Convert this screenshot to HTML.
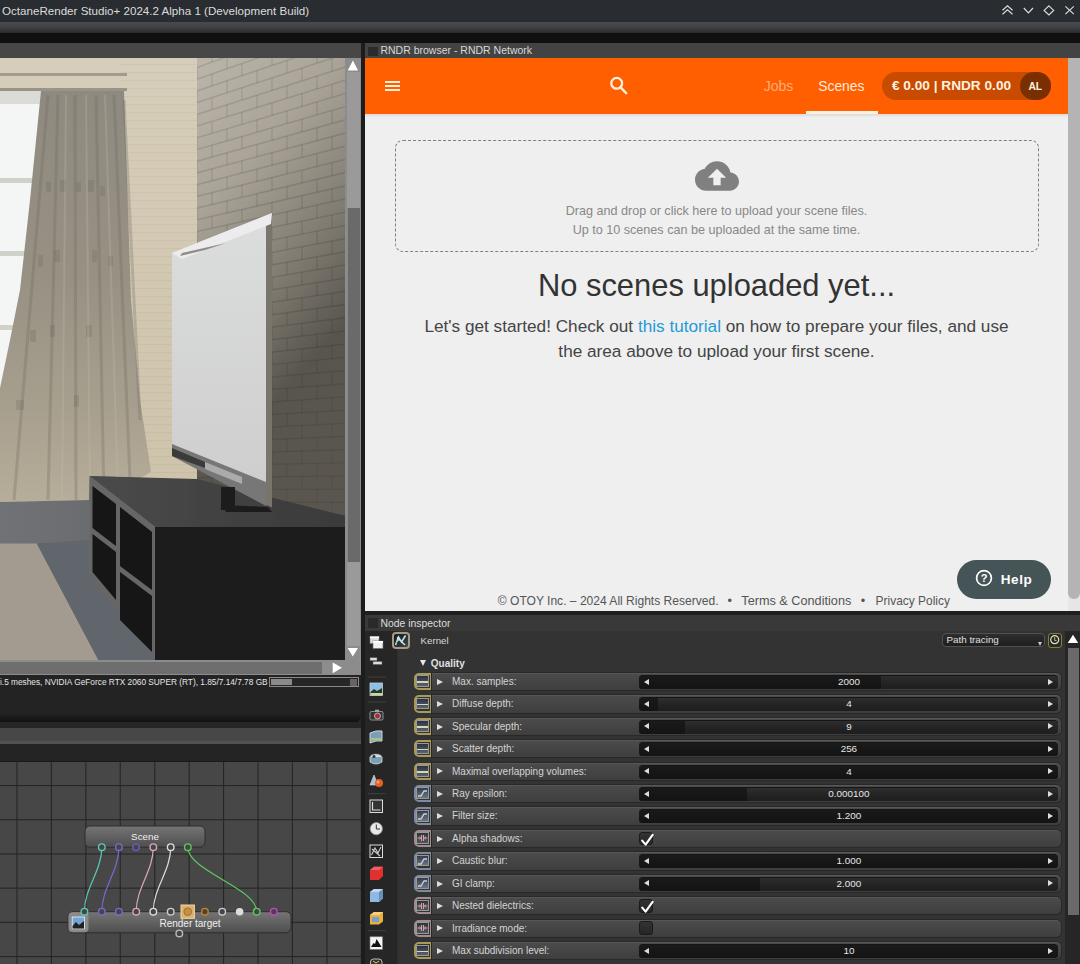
<!DOCTYPE html>
<html><head><meta charset="utf-8"><style>
*{margin:0;padding:0;box-sizing:border-box}
html,body{width:1080px;height:964px;overflow:hidden;background:#2b2b2b;font-family:"Liberation Sans",sans-serif}
.a{position:absolute}
#title{left:0;top:0;width:1080px;height:22px;background:#292c31;color:#dcdcdc;font-size:11.6px;line-height:22px;padding-left:2px;white-space:nowrap}
#band{left:0;top:22px;width:1080px;height:11px;background:linear-gradient(#4a4a4e,#444447 40%,#2a2a2c)}
#black{left:0;top:32.5px;width:1080px;height:10.5px;background:#101010}
#lhead{left:0;top:43px;width:361px;height:15px;background:#474747}
#vscroll{left:345px;top:58px;width:16px;height:602px;background:#8c8c8c}
#vtrack{left:347px;top:72px;width:12.5px;height:574px;background:#9a9a9a}
#vthumb{left:347px;top:208px;width:12.5px;height:354px;background:#6a6a6a;border-left:1px solid #8a8a8a}
#hscroll{left:0;top:660px;width:361px;height:14.5px;background:#8c8c8c}
#hthumb{left:0;top:662px;width:322px;height:12px;background:#6e6e6e}
#status{left:0;top:674.5px;width:361px;height:14px;background:#232323;color:#e6e6e6;font-size:8.3px;line-height:14px;white-space:nowrap;letter-spacing:0px}
#prog{left:269px;top:677.2px;width:90px;height:10px;border:1px solid #8a8a8a;background:#262626}
#ldark{left:0;top:688.5px;width:361px;height:34px;background:linear-gradient(#232323 0,#232323 72%,#0f0f0f 100%);border-radius:0 0 7px 0}
#lgap{left:0;top:722px;width:361px;height:6px;background:#262626}
#lbar1{left:0;top:728px;width:361px;height:16px;background:#474747;border-bottom:3px solid #525252}
#lbar2{left:0;top:744px;width:361px;height:17px;background:#242424}
#grid{left:0;top:761px;width:361px;height:203px;background:#474747}
#divider{left:361px;top:43px;width:4px;height:921px;background:#1c1c1c}
#rhead{left:365px;top:43px;width:715px;height:15px;background:#434343;color:#d8d8d8;font-size:10.5px;line-height:15px;padding-left:15.4px;white-space:nowrap}
#rchk{left:368.3px;top:46.5px;width:9.3px;height:9.2px;background:#2b2b2b}
#web{left:365px;top:58px;width:703px;height:552.5px;background:#efefef;overflow:hidden}
#wscroll{left:1068px;top:58px;width:12px;height:552.5px;background:#e6e6e6}
#wthumb{left:1068px;top:58px;width:12px;height:541px;background:#b4b4b4;border-radius:0 0 6px 6px}
#orange{left:0;top:0;width:703px;height:56px;background:#ff5f00;box-shadow:0 1px 3px rgba(0,0,0,0.12)}
#ham{left:19.8px;top:22.9px;width:15px;height:10.5px;border-top:2px solid #fff1d8;border-bottom:2px solid #fff1d8}
#ham:after{content:"";position:absolute;left:0;top:2.3px;width:15px;height:2px;background:#fff1d8}
#jobs{left:398.7px;top:17px;font-size:14px;color:#ffab78;line-height:22px;white-space:nowrap}
#scenes{left:453.2px;top:17px;font-size:13.9px;color:#ffeadb;line-height:22px;white-space:nowrap}
#uline{left:440.5px;top:53px;width:72.5px;height:3px;background:#fff1e2}
#pill{left:517px;top:14px;width:168.6px;height:27.8px;background:#c84b00;border-radius:14px}
#ptxt{left:526.9px;top:17px;font-size:13.66px;font-weight:bold;color:#fff1e0;line-height:22px;white-space:nowrap}
#av{left:655px;top:14px;padding-top:1px;width:30.6px;height:27.8px;background:#7a2f00;border-radius:15px;color:#fff1e0;font-weight:bold;font-size:10.3px;line-height:27.8px;text-align:center}
#dash{left:29.5px;top:82px;width:644.5px;height:112px;border:1.8px dashed #7f7f7f;border-radius:8px}
#drag{left:0;top:144.2px;width:703px;text-align:center;color:#888;font-size:12.6px;line-height:18.4px}
#h1{left:0;top:209.3px;width:703px;text-align:center;color:#333;font-size:30.9px;line-height:38px;white-space:nowrap}
#para{left:0;top:256.3px;width:703px;text-align:center;color:#444;font-size:17.2px;line-height:24.5px}
#para span{color:#1e9bd7}
.ft{top:534px;color:#555;font-size:12.7px;line-height:18px;white-space:nowrap}
#help{left:592px;top:501.5px;width:93.8px;height:39.3px;background:#455457;border-radius:20px}
#helpt{left:635.7px;top:513px;color:#fff;font-weight:bold;font-size:13.5px;line-height:18px;letter-spacing:0.6px}
#ihead{left:365px;top:610.5px;width:715px;height:20.5px;background:#393939;border-top:4px solid #1f1f1f;color:#dedede;font-size:10.4px;line-height:18.5px;padding-left:15.5px;white-space:nowrap}
#ichk{left:367.5px;top:618px;width:10.5px;height:10px;background:#2a2a2a}
#istrip{left:365px;top:631px;width:31.5px;height:333px;background:#262626}
#ibody{left:396.5px;top:631px;width:668.5px;height:333px;background:#333333;border-left:1.5px solid #2d2d2d}
#iscroll{left:1065px;top:631px;width:15px;height:333px;background:#262626}
#ithumb{left:1068px;top:648.3px;width:10.6px;height:267px;background:#6a6a6a}
#kico{left:392px;top:632.4px;width:18px;height:16.2px;border:2px solid #a89a84;border-radius:4px;background:linear-gradient(135deg,#0c1820,#3a4a50)}
#ktxt{left:420.6px;top:635px;color:#d8d8d8;font-size:9.7px;line-height:12px}
#qtxt{left:430.8px;top:657px;color:#e0e0e0;font-size:10px;line-height:13px;font-weight:bold;white-space:nowrap}
#dd{left:941.5px;top:632.8px;width:103px;height:14.4px;background:linear-gradient(#2e2e2e,#1e1e1e);border:1px solid #505050;border-radius:4px;color:#e0e0e0;font-size:9.8px;line-height:12.4px;padding-left:4px}
#ddbtn{left:1047.9px;top:632.8px;width:14.4px;height:14.8px;border:1.5px solid #8a8030;border-radius:3px;background:#2a2a20}
.ico{left:413.9px;width:18.1px;height:17.4px;border:2.4px solid;border-right-width:2px;border-radius:5px 0 0 5px;background:#333}
.icin{position:absolute;left:0.6px;top:0.6px;width:12.2px;height:11.6px;border:1px solid #9a9a90}
.rowbg{left:432px;width:629px;height:17.4px;background:linear-gradient(#4b4b4b,#3e3e3e);border-top:1px solid #575757;border-radius:0 5px 5px 0;box-shadow:0 0 0 1px #282828}
.rarr{left:436.5px;width:0;height:0;border-left:6px solid #ddd;border-top:3px solid transparent;border-bottom:3px solid transparent}
.lbl{left:452px;color:#d4d4d4;font-size:10px;line-height:17.4px;white-space:nowrap}
.sld{left:639.4px;width:419px;height:14px;background:linear-gradient(#2e2e2e,#222 60%,#1e1e1e);border-radius:3.5px;border-top:1px solid #151515;overflow:hidden}
.sfill{position:absolute;left:0;top:0;height:14px;background:linear-gradient(#1a1a1a,#131313)}
.sl{position:absolute;left:4.2px;top:2.8px;width:0;height:0;border-right:5.5px solid #ddd;border-top:3px solid transparent;border-bottom:3px solid transparent}
.sr{position:absolute;right:5px;top:2.8px;width:0;height:0;border-left:5.5px solid #ddd;border-top:3px solid transparent;border-bottom:3px solid transparent}
.sval{position:absolute;left:0;right:0;top:0;text-align:center;color:#e6e6e6;font-size:9.9px;line-height:11.5px}
.chk{left:639.3px;width:13.7px;height:13.7px;background:linear-gradient(#333,#262626);border:1px solid #1a1a1a;border-radius:3px}
</style></head><body>
<div id="title" class="a">OctaneRender Studio+ 2024.2 Alpha 1 (Development Build)</div>
<svg class="a" style="left:995px;top:0" width="85" height="22" viewBox="995 0 85 22">
<path d="M1002.5 10.2 L1007.5 5.8 L1012.5 10.2 M1002.5 14.2 L1007.5 9.8 L1012.5 14.2" stroke="#dedede" stroke-width="1.15" fill="none"/>
<path d="M1023.8 8 L1028.4 12.9 L1033 8" stroke="#dedede" stroke-width="1.15" fill="none"/>
<path d="M1048.9 5.9 L1053.7 10.4 L1048.9 15 L1044.1 10.4 Z" stroke="#dedede" stroke-width="1.15" fill="none"/>
<path d="M1065.4 6.3 L1073.8 14.2 M1073.8 6.3 L1065.4 14.2" stroke="#dedede" stroke-width="1.15" fill="none"/>
</svg>
<div id="band" class="a"></div>
<div id="black" class="a"></div>
<div id="lhead" class="a"></div>
<svg class="a" style="left:0;top:58px" width="346" height="602" viewBox="0 58 346 602">
<defs>
<linearGradient id="brick" x1="0" y1="0" x2="0.35" y2="1">
<stop offset="0" stop-color="#bcb6aa"/><stop offset="0.3" stop-color="#aaa498"/><stop offset="0.58" stop-color="#827d73"/><stop offset="0.82" stop-color="#58554e"/><stop offset="1" stop-color="#5a5750"/></linearGradient>
<linearGradient id="plaster" x1="0" y1="0" x2="0" y2="1">
<stop offset="0" stop-color="#d6cdba"/><stop offset="1" stop-color="#cbbfa4"/></linearGradient>
<linearGradient id="curt" x1="0" y1="0" x2="0" y2="1">
<stop offset="0" stop-color="#8f8a7f"/><stop offset="0.45" stop-color="#979184"/><stop offset="0.75" stop-color="#a69e8d"/><stop offset="1" stop-color="#b6ad9a"/></linearGradient>
<linearGradient id="tv" x1="0" y1="0" x2="0" y2="1">
<stop offset="0" stop-color="#dcdddd"/><stop offset="1" stop-color="#cdcdcd"/></linearGradient>
<linearGradient id="floor" x1="0" y1="0" x2="1" y2="0">
<stop offset="0" stop-color="#707276"/><stop offset="1" stop-color="#5c5c5c"/></linearGradient>
<linearGradient id="ctop" x1="0" y1="0" x2="1" y2="0">
<stop offset="0" stop-color="#4a4a4a"/><stop offset="1" stop-color="#3a3a3a"/></linearGradient>
<pattern id="bp" width="22" height="11" patternUnits="userSpaceOnUse" patternTransform="skewY(10)">
<path d="M0 0.5H22M0 6H22M11 0V5.5M0 5.5V11" stroke="#000" stroke-opacity="0.12" stroke-width="1.2" fill="none"/>
</pattern>
<pattern id="pp" width="10" height="8" patternUnits="userSpaceOnUse">
<path d="M0 0.5H10" stroke="#8a7f68" stroke-opacity="0.09" stroke-width="1.2" fill="none"/>
</pattern>
<filter id="bl"><feGaussianBlur stdDeviation="0.7"/></filter>
</defs>
<g filter="url(#bl)">
<rect x="0" y="58" width="346" height="602" fill="url(#plaster)"/>
<rect x="120" y="58" width="80" height="420" fill="url(#pp)"/>
<polygon points="197,58 346,58 346,524 197,480" fill="url(#brick)"/>
<clipPath id="bc"><polygon points="197,58 346,58 346,524 197,480"/></clipPath><g clip-path="url(#bc)" stroke="#000" fill="none">
<path d="M197 -166.8 L346 -250.0" stroke-opacity="0.11" stroke-width="1.6"/>
<path d="M197 -155.1 L346 -236.8" stroke-opacity="0.11" stroke-width="1.6"/>
<path d="M197 -143.4 L346 -223.6" stroke-opacity="0.11" stroke-width="1.6"/>
<path d="M197 -131.7 L346 -210.4" stroke-opacity="0.11" stroke-width="1.6"/>
<path d="M197 -120.0 L346 -197.2" stroke-opacity="0.11" stroke-width="1.6"/>
<path d="M197 -108.3 L346 -184.0" stroke-opacity="0.11" stroke-width="1.6"/>
<path d="M197 -96.5 L346 -170.8" stroke-opacity="0.11" stroke-width="1.6"/>
<path d="M197 -84.8 L346 -157.6" stroke-opacity="0.11" stroke-width="1.6"/>
<path d="M197 -73.1 L346 -144.4" stroke-opacity="0.11" stroke-width="1.6"/>
<path d="M197 -61.4 L346 -131.2" stroke-opacity="0.11" stroke-width="1.6"/>
<path d="M197 -49.7 L346 -118.0" stroke-opacity="0.11" stroke-width="1.6"/>
<path d="M197 -38.0 L346 -104.8" stroke-opacity="0.11" stroke-width="1.6"/>
<path d="M197 -26.2 L346 -91.6" stroke-opacity="0.11" stroke-width="1.6"/>
<path d="M197 -14.5 L346 -78.4" stroke-opacity="0.11" stroke-width="1.6"/>
<path d="M197 -2.8 L346 -65.2" stroke-opacity="0.11" stroke-width="1.6"/>
<path d="M197 8.9 L346 -52.0" stroke-opacity="0.11" stroke-width="1.6"/>
<path d="M197 20.6 L346 -38.8" stroke-opacity="0.11" stroke-width="1.6"/>
<path d="M197 32.3 L346 -25.6" stroke-opacity="0.11" stroke-width="1.6"/>
<path d="M197 44.1 L346 -12.4" stroke-opacity="0.11" stroke-width="1.6"/>
<path d="M197 55.8 L346 0.8" stroke-opacity="0.11" stroke-width="1.6"/>
<path d="M197 67.5 L346 14.0" stroke-opacity="0.11" stroke-width="1.6"/>
<path d="M197 79.2 L346 27.2" stroke-opacity="0.11" stroke-width="1.6"/>
<path d="M197 90.9 L346 40.4" stroke-opacity="0.11" stroke-width="1.6"/>
<path d="M197 102.6 L346 53.6" stroke-opacity="0.11" stroke-width="1.6"/>
<path d="M197 114.4 L346 66.8" stroke-opacity="0.11" stroke-width="1.6"/>
<path d="M197 126.1 L346 80.0" stroke-opacity="0.11" stroke-width="1.6"/>
<path d="M197 137.8 L346 93.2" stroke-opacity="0.11" stroke-width="1.6"/>
<path d="M197 149.5 L346 106.4" stroke-opacity="0.11" stroke-width="1.6"/>
<path d="M197 161.2 L346 119.6" stroke-opacity="0.11" stroke-width="1.6"/>
<path d="M197 172.9 L346 132.8" stroke-opacity="0.11" stroke-width="1.6"/>
<path d="M197 184.7 L346 146.0" stroke-opacity="0.11" stroke-width="1.6"/>
<path d="M197 196.4 L346 159.2" stroke-opacity="0.11" stroke-width="1.6"/>
<path d="M197 208.1 L346 172.4" stroke-opacity="0.11" stroke-width="1.6"/>
<path d="M197 219.8 L346 185.6" stroke-opacity="0.11" stroke-width="1.6"/>
<path d="M197 231.5 L346 198.8" stroke-opacity="0.11" stroke-width="1.6"/>
<path d="M197 243.2 L346 212.0" stroke-opacity="0.11" stroke-width="1.6"/>
<path d="M197 255.0 L346 225.2" stroke-opacity="0.11" stroke-width="1.6"/>
<path d="M197 266.7 L346 238.4" stroke-opacity="0.11" stroke-width="1.6"/>
<path d="M197 278.4 L346 251.6" stroke-opacity="0.11" stroke-width="1.6"/>
<path d="M197 290.1 L346 264.8" stroke-opacity="0.11" stroke-width="1.6"/>
<path d="M197 301.8 L346 278.0" stroke-opacity="0.11" stroke-width="1.6"/>
<path d="M197 313.5 L346 291.2" stroke-opacity="0.11" stroke-width="1.6"/>
<path d="M197 325.3 L346 304.4" stroke-opacity="0.11" stroke-width="1.6"/>
<path d="M197 337.0 L346 317.6" stroke-opacity="0.11" stroke-width="1.6"/>
<path d="M197 348.7 L346 330.8" stroke-opacity="0.11" stroke-width="1.6"/>
<path d="M197 360.4 L346 344.0" stroke-opacity="0.11" stroke-width="1.6"/>
<path d="M197 372.1 L346 357.2" stroke-opacity="0.09" stroke-width="1.6"/>
<path d="M197 383.8 L346 370.4" stroke-opacity="0.09" stroke-width="1.6"/>
<path d="M197 395.6 L346 383.6" stroke-opacity="0.09" stroke-width="1.6"/>
<path d="M197 407.3 L346 396.8" stroke-opacity="0.09" stroke-width="1.6"/>
<path d="M197 419.0 L346 410.0" stroke-opacity="0.09" stroke-width="1.6"/>
<path d="M197 430.7 L346 423.2" stroke-opacity="0.09" stroke-width="1.6"/>
<path d="M197 442.4 L346 436.4" stroke-opacity="0.09" stroke-width="1.6"/>
<path d="M197 454.1 L346 449.6" stroke-opacity="0.09" stroke-width="1.6"/>
<path d="M197 465.9 L346 462.8" stroke-opacity="0.09" stroke-width="1.6"/>
<path d="M197 477.6 L346 476.0" stroke-opacity="0.09" stroke-width="1.6"/>
<path d="M197 489.3 L346 489.2" stroke-opacity="0.09" stroke-width="1.6"/>
<path d="M197 501.0 L346 502.4" stroke-opacity="0.09" stroke-width="1.6"/>
<path d="M197 512.7 L346 515.6" stroke-opacity="0.09" stroke-width="1.6"/>
<path d="M197 524.4 L346 528.8" stroke-opacity="0.09" stroke-width="1.6"/>
<path d="M197.0 -166.8 L197.0 -155.1 M227.0 -183.6 L227.0 -171.6 M257.0 -200.3 L257.0 -188.0 M287.0 -217.1 L287.0 -204.5 M317.0 -233.8 L317.0 -220.9 M347.0 -250.6 L347.0 -237.3" stroke-opacity="0.09" stroke-width="1.5"/>
<path d="M212.0 -163.4 L212.0 -151.5 M242.0 -179.8 L242.0 -167.6 M272.0 -196.2 L272.0 -183.8 M302.0 -212.7 L302.0 -199.9 M332.0 -229.1 L332.0 -216.1" stroke-opacity="0.09" stroke-width="1.5"/>
<path d="M197.0 -143.4 L197.0 -131.7 M227.0 -159.6 L227.0 -147.5 M257.0 -175.7 L257.0 -163.4 M287.0 -191.8 L287.0 -179.2 M317.0 -208.0 L317.0 -195.1 M347.0 -224.1 L347.0 -210.9" stroke-opacity="0.09" stroke-width="1.5"/>
<path d="M212.0 -139.6 L212.0 -127.8 M242.0 -155.5 L242.0 -143.3 M272.0 -171.3 L272.0 -158.8 M302.0 -187.2 L302.0 -174.4 M332.0 -203.0 L332.0 -189.9" stroke-opacity="0.09" stroke-width="1.5"/>
<path d="M197.0 -120.0 L197.0 -108.3 M227.0 -135.5 L227.0 -123.5 M257.0 -151.1 L257.0 -138.8 M287.0 -166.6 L287.0 -154.0 M317.0 -182.2 L317.0 -169.3 M347.0 -197.7 L347.0 -184.5" stroke-opacity="0.09" stroke-width="1.5"/>
<path d="M212.0 -115.9 L212.0 -104.0 M242.0 -131.1 L242.0 -119.0 M272.0 -146.4 L272.0 -133.9 M302.0 -161.6 L302.0 -148.9 M332.0 -176.9 L332.0 -163.8" stroke-opacity="0.09" stroke-width="1.5"/>
<path d="M197.0 -96.5 L197.0 -84.8 M227.0 -111.5 L227.0 -99.5 M257.0 -126.4 L257.0 -114.1 M287.0 -141.4 L287.0 -128.8 M317.0 -156.3 L317.0 -143.4 M347.0 -171.3 L347.0 -158.1" stroke-opacity="0.09" stroke-width="1.5"/>
<path d="M212.0 -92.2 L212.0 -80.3 M242.0 -106.8 L242.0 -94.6 M272.0 -121.5 L272.0 -109.0 M302.0 -136.1 L302.0 -123.3 M332.0 -150.8 L332.0 -137.7" stroke-opacity="0.09" stroke-width="1.5"/>
<path d="M197.0 -73.1 L197.0 -61.4 M227.0 -87.5 L227.0 -75.5 M257.0 -101.8 L257.0 -89.5 M287.0 -116.2 L287.0 -103.6 M317.0 -130.5 L317.0 -117.6 M347.0 -144.9 L347.0 -131.7" stroke-opacity="0.09" stroke-width="1.5"/>
<path d="M212.0 -68.4 L212.0 -56.6 M242.0 -82.5 L242.0 -70.3 M272.0 -96.5 L272.0 -84.1 M302.0 -110.6 L302.0 -97.8 M332.0 -124.6 L332.0 -111.6" stroke-opacity="0.09" stroke-width="1.5"/>
<path d="M197.0 -49.7 L197.0 -38.0 M227.0 -63.4 L227.0 -51.4 M257.0 -77.2 L257.0 -64.9 M287.0 -90.9 L287.0 -78.3 M317.0 -104.7 L317.0 -91.8 M347.0 -118.5 L347.0 -105.2" stroke-opacity="0.09" stroke-width="1.5"/>
<path d="M212.0 -44.7 L212.0 -32.8 M242.0 -58.1 L242.0 -46.0 M272.0 -71.6 L272.0 -59.1 M302.0 -85.1 L302.0 -72.3 M332.0 -98.5 L332.0 -85.5" stroke-opacity="0.09" stroke-width="1.5"/>
<path d="M197.0 -26.2 L197.0 -14.5 M227.0 -39.4 L227.0 -27.4 M257.0 -52.6 L257.0 -40.2 M287.0 -65.7 L287.0 -53.1 M317.0 -78.9 L317.0 -66.0 M347.0 -92.0 L347.0 -78.8" stroke-opacity="0.09" stroke-width="1.5"/>
<path d="M212.0 -21.0 L212.0 -9.1 M242.0 -33.8 L242.0 -21.7 M272.0 -46.7 L272.0 -34.2 M302.0 -59.5 L302.0 -46.8 M332.0 -72.4 L332.0 -59.3" stroke-opacity="0.09" stroke-width="1.5"/>
<path d="M197.0 -2.8 L197.0 8.9 M227.0 -15.4 L227.0 -3.4 M257.0 -27.9 L257.0 -15.6 M287.0 -40.5 L287.0 -27.9 M317.0 -53.1 L317.0 -40.1 M347.0 -65.6 L347.0 -52.4" stroke-opacity="0.09" stroke-width="1.5"/>
<path d="M212.0 2.8 L212.0 14.6 M242.0 -9.5 L242.0 2.7 M272.0 -21.8 L272.0 -9.3 M302.0 -34.0 L302.0 -21.3 M332.0 -46.3 L332.0 -33.2" stroke-opacity="0.09" stroke-width="1.5"/>
<path d="M197.0 20.6 L197.0 32.3 M227.0 8.7 L227.0 20.7 M257.0 -3.3 L257.0 9.0 M287.0 -15.3 L287.0 -2.7 M317.0 -27.2 L317.0 -14.3 M347.0 -39.2 L347.0 -26.0" stroke-opacity="0.09" stroke-width="1.5"/>
<path d="M212.0 26.5 L212.0 38.4 M242.0 14.8 L242.0 27.0 M272.0 3.2 L272.0 15.6 M302.0 -8.5 L302.0 4.3 M332.0 -20.2 L332.0 -7.1" stroke-opacity="0.09" stroke-width="1.5"/>
<path d="M197.0 44.1 L197.0 55.8 M227.0 32.7 L227.0 44.7 M257.0 21.3 L257.0 33.6 M287.0 10.0 L287.0 22.6 M317.0 -1.4 L317.0 11.5 M347.0 -12.8 L347.0 0.4" stroke-opacity="0.09" stroke-width="1.5"/>
<path d="M212.0 50.2 L212.0 62.1 M242.0 39.2 L242.0 51.3 M272.0 28.1 L272.0 40.6 M302.0 17.0 L302.0 29.8 M332.0 6.0 L332.0 19.0" stroke-opacity="0.09" stroke-width="1.5"/>
<path d="M197.0 67.5 L197.0 79.2 M227.0 56.7 L227.0 68.7 M257.0 45.9 L257.0 58.3 M287.0 35.2 L287.0 47.8 M317.0 24.4 L317.0 37.3 M347.0 13.6 L347.0 26.9" stroke-opacity="0.09" stroke-width="1.5"/>
<path d="M212.0 74.0 L212.0 85.8 M242.0 63.5 L242.0 75.7 M272.0 53.0 L272.0 65.5 M302.0 42.6 L302.0 55.3 M332.0 32.1 L332.0 45.1" stroke-opacity="0.09" stroke-width="1.5"/>
<path d="M197.0 90.9 L197.0 102.6 M227.0 80.7 L227.0 92.8 M257.0 70.6 L257.0 82.9 M287.0 60.4 L287.0 73.0 M317.0 50.2 L317.0 63.1 M347.0 40.1 L347.0 53.3" stroke-opacity="0.09" stroke-width="1.5"/>
<path d="M212.0 97.7 L212.0 109.6 M242.0 87.8 L242.0 100.0 M272.0 78.0 L272.0 90.4 M302.0 68.1 L302.0 80.8 M332.0 58.2 L332.0 71.3" stroke-opacity="0.09" stroke-width="1.5"/>
<path d="M197.0 114.4 L197.0 126.1 M227.0 104.8 L227.0 116.8 M257.0 95.2 L257.0 107.5 M287.0 85.6 L287.0 98.2 M317.0 76.1 L317.0 89.0 M347.0 66.5 L347.0 79.7" stroke-opacity="0.09" stroke-width="1.5"/>
<path d="M212.0 121.4 L212.0 133.3 M242.0 112.2 L242.0 124.3 M272.0 102.9 L272.0 115.3 M302.0 93.6 L302.0 106.4 M332.0 84.3 L332.0 97.4" stroke-opacity="0.09" stroke-width="1.5"/>
<path d="M197.0 137.8 L197.0 149.5 M227.0 128.8 L227.0 140.8 M257.0 119.8 L257.0 132.1 M287.0 110.9 L287.0 123.5 M317.0 101.9 L317.0 114.8 M347.0 92.9 L347.0 106.1" stroke-opacity="0.09" stroke-width="1.5"/>
<path d="M212.0 145.2 L212.0 157.0 M242.0 136.5 L242.0 148.7 M272.0 127.8 L272.0 140.3 M302.0 119.1 L302.0 131.9 M332.0 110.5 L332.0 123.5" stroke-opacity="0.09" stroke-width="1.5"/>
<path d="M197.0 161.2 L197.0 172.9 M227.0 152.8 L227.0 164.9 M257.0 144.5 L257.0 156.8 M287.0 136.1 L287.0 148.7 M317.0 127.7 L317.0 140.6 M347.0 119.3 L347.0 132.5" stroke-opacity="0.09" stroke-width="1.5"/>
<path d="M212.0 168.9 L212.0 180.8 M242.0 160.8 L242.0 173.0 M272.0 152.7 L272.0 165.2 M302.0 144.7 L302.0 157.4 M332.0 136.6 L332.0 149.6" stroke-opacity="0.09" stroke-width="1.5"/>
<path d="M197.0 184.7 L197.0 196.4 M227.0 176.9 L227.0 188.9 M257.0 169.1 L257.0 181.4 M287.0 161.3 L287.0 173.9 M317.0 153.5 L317.0 166.4 M347.0 145.7 L347.0 159.0" stroke-opacity="0.09" stroke-width="1.5"/>
<path d="M212.0 192.6 L212.0 204.5 M242.0 185.1 L242.0 197.3 M272.0 177.7 L272.0 190.1 M302.0 170.2 L302.0 182.9 M332.0 162.7 L332.0 175.8" stroke-opacity="0.09" stroke-width="1.5"/>
<path d="M197.0 208.1 L197.0 219.8 M227.0 200.9 L227.0 212.9 M257.0 193.7 L257.0 206.0 M287.0 186.5 L287.0 199.1 M317.0 179.3 L317.0 192.3 M347.0 172.2 L347.0 185.4" stroke-opacity="0.09" stroke-width="1.5"/>
<path d="M212.0 216.4 L212.0 228.2 M242.0 209.5 L242.0 221.6 M272.0 202.6 L272.0 215.1 M302.0 195.7 L302.0 208.5 M332.0 188.8 L332.0 201.9" stroke-opacity="0.09" stroke-width="1.5"/>
<path d="M197.0 231.5 L197.0 243.2 M227.0 224.9 L227.0 236.9 M257.0 218.3 L257.0 230.7 M287.0 211.8 L287.0 224.4 M317.0 205.2 L317.0 218.1 M347.0 198.6 L347.0 211.8" stroke-opacity="0.09" stroke-width="1.5"/>
<path d="M212.0 240.1 L212.0 252.0 M242.0 233.8 L242.0 246.0 M272.0 227.5 L272.0 240.0 M302.0 221.2 L302.0 234.0 M332.0 214.9 L332.0 228.0" stroke-opacity="0.09" stroke-width="1.5"/>
<path d="M197.0 255.0 L197.0 266.7 M227.0 249.0 L227.0 261.0 M257.0 243.0 L257.0 255.3 M287.0 237.0 L287.0 249.6 M317.0 231.0 L317.0 243.9 M347.0 225.0 L347.0 238.2" stroke-opacity="0.09" stroke-width="1.5"/>
<path d="M212.0 263.8 L212.0 275.7 M242.0 258.1 L242.0 270.3 M272.0 252.4 L272.0 264.9 M302.0 246.7 L302.0 259.5 M332.0 241.1 L332.0 254.1" stroke-opacity="0.09" stroke-width="1.5"/>
<path d="M197.0 278.4 L197.0 290.1 M227.0 273.0 L227.0 285.0 M257.0 267.6 L257.0 279.9 M287.0 262.2 L287.0 274.8 M317.0 256.8 L317.0 269.7 M347.0 251.4 L347.0 264.6" stroke-opacity="0.09" stroke-width="1.5"/>
<path d="M212.0 287.6 L212.0 299.4 M242.0 282.5 L242.0 294.6 M272.0 277.4 L272.0 289.8 M302.0 272.3 L302.0 285.0 M332.0 267.2 L332.0 280.2" stroke-opacity="0.09" stroke-width="1.5"/>
<path d="M197.0 301.8 L197.0 313.5 M227.0 297.0 L227.0 309.0 M257.0 292.2 L257.0 304.5 M287.0 287.4 L287.0 300.0 M317.0 282.6 L317.0 295.5 M347.0 277.8 L347.0 291.1" stroke-opacity="0.09" stroke-width="1.5"/>
<path d="M212.0 311.3 L212.0 323.2 M242.0 306.8 L242.0 319.0 M272.0 302.3 L272.0 314.8 M302.0 297.8 L302.0 310.6 M332.0 293.3 L332.0 306.4" stroke-opacity="0.09" stroke-width="1.5"/>
<path d="M197.0 325.3 L197.0 337.0 M227.0 321.1 L227.0 333.1 M257.0 316.9 L257.0 329.2 M287.0 312.7 L287.0 325.3 M317.0 308.5 L317.0 321.4 M347.0 304.3 L347.0 317.5" stroke-opacity="0.09" stroke-width="1.5"/>
<path d="M212.0 335.0 L212.0 346.9 M242.0 331.1 L242.0 343.3 M272.0 327.2 L272.0 339.7 M302.0 323.3 L302.0 336.1 M332.0 319.4 L332.0 332.5" stroke-opacity="0.09" stroke-width="1.5"/>
<path d="M197.0 348.7 L197.0 360.4 M227.0 345.1 L227.0 357.1 M257.0 341.5 L257.0 353.8 M287.0 337.9 L287.0 350.5 M317.0 334.3 L317.0 347.2 M347.0 330.7 L347.0 343.9" stroke-opacity="0.09" stroke-width="1.5"/>
<path d="M212.0 358.8 L212.0 370.6 M242.0 355.5 L242.0 367.6 M272.0 352.1 L272.0 364.6 M302.0 348.8 L302.0 361.6 M332.0 345.5 L332.0 358.6" stroke-opacity="0.09" stroke-width="1.5"/>
<path d="M197.0 372.1 L197.0 383.8 M227.0 369.1 L227.0 381.1 M257.0 366.1 L257.0 378.4 M287.0 363.1 L287.0 375.7 M317.0 360.1 L317.0 373.0 M347.0 357.1 L347.0 370.3" stroke-opacity="0.07" stroke-width="1.5"/>
<path d="M212.0 382.5 L212.0 394.4 M242.0 379.8 L242.0 391.9 M272.0 377.1 L272.0 389.5 M302.0 374.4 L302.0 387.1 M332.0 371.7 L332.0 384.7" stroke-opacity="0.07" stroke-width="1.5"/>
<path d="M197.0 395.6 L197.0 407.3 M227.0 393.1 L227.0 405.2 M257.0 390.7 L257.0 403.1 M287.0 388.3 L287.0 400.9 M317.0 385.9 L317.0 398.8 M347.0 383.5 L347.0 396.7" stroke-opacity="0.07" stroke-width="1.5"/>
<path d="M212.0 406.2 L212.0 418.1 M242.0 404.1 L242.0 416.3 M272.0 402.0 L272.0 414.5 M302.0 399.9 L302.0 412.7 M332.0 397.8 L332.0 410.8" stroke-opacity="0.07" stroke-width="1.5"/>
<path d="M197.0 419.0 L197.0 430.7 M227.0 417.2 L227.0 429.2 M257.0 415.4 L257.0 427.7 M287.0 413.6 L287.0 426.2 M317.0 411.7 L317.0 424.7 M347.0 409.9 L347.0 423.1" stroke-opacity="0.07" stroke-width="1.5"/>
<path d="M212.0 430.0 L212.0 441.8 M242.0 428.4 L242.0 440.6 M272.0 426.9 L272.0 439.4 M302.0 425.4 L302.0 438.2 M332.0 423.9 L332.0 437.0" stroke-opacity="0.07" stroke-width="1.5"/>
<path d="M197.0 442.4 L197.0 454.1 M227.0 441.2 L227.0 453.2 M257.0 440.0 L257.0 452.3 M287.0 438.8 L287.0 451.4 M317.0 437.6 L317.0 450.5 M347.0 436.4 L347.0 449.6" stroke-opacity="0.07" stroke-width="1.5"/>
<path d="M212.0 453.7 L212.0 465.5 M242.0 452.8 L242.0 464.9 M272.0 451.9 L272.0 464.3 M302.0 450.9 L302.0 463.7 M332.0 450.0 L332.0 463.1" stroke-opacity="0.07" stroke-width="1.5"/>
<path d="M197.0 465.9 L197.0 477.6 M227.0 465.2 L227.0 477.3 M257.0 464.6 L257.0 476.9 M287.0 464.0 L287.0 476.6 M317.0 463.4 L317.0 476.3 M347.0 462.8 L347.0 476.0" stroke-opacity="0.07" stroke-width="1.5"/>
<path d="M212.0 477.4 L212.0 489.3 M242.0 477.1 L242.0 489.3 M272.0 476.8 L272.0 489.2 M302.0 476.5 L302.0 489.2 M332.0 476.1 L332.0 489.2" stroke-opacity="0.07" stroke-width="1.5"/>
<path d="M197.0 489.3 L197.0 501.0 M227.0 489.3 L227.0 501.3 M257.0 489.3 L257.0 501.6 M287.0 489.2 L287.0 501.8 M317.0 489.2 L317.0 502.1 M347.0 489.2 L347.0 502.4" stroke-opacity="0.07" stroke-width="1.5"/>
<path d="M212.0 501.1 L212.0 513.0 M242.0 501.4 L242.0 513.6 M272.0 501.7 L272.0 514.2 M302.0 502.0 L302.0 514.8 M332.0 502.3 L332.0 515.3" stroke-opacity="0.07" stroke-width="1.5"/>
<path d="M197.0 512.7 L197.0 524.4 M227.0 513.3 L227.0 525.3 M257.0 513.9 L257.0 526.2 M287.0 514.5 L287.0 527.1 M317.0 515.0 L317.0 528.0 M347.0 515.6 L347.0 528.8" stroke-opacity="0.07" stroke-width="1.5"/>
<path d="M212.0 524.9 L212.0 536.7 M242.0 525.8 L242.0 537.9 M272.0 526.6 L272.0 539.1 M302.0 527.5 L302.0 540.3 M332.0 528.4 L332.0 541.5" stroke-opacity="0.07" stroke-width="1.5"/>
</g>
<rect x="0" y="91" width="44" height="360" fill="#f4f6f6"/><rect x="0" y="91" width="44" height="13" fill="#dcdcd6"/>
<rect x="0" y="178" width="40" height="5" fill="#d0d1c9"/>
<rect x="0" y="251" width="38" height="5" fill="#d0d1c9"/>
<rect x="0" y="325" width="36" height="5" fill="#d0d1c9"/>
<rect x="0" y="73" width="127" height="3" fill="#a29b8e"/>
<rect x="0" y="88" width="127" height="3" fill="#9a9387"/>
<polygon points="41,91 124,91 131,300 140,400 151,472 120,490 89,500 0,502 0,388 10,340 20,290 30,200" fill="url(#curt)"/>
<path d="M58 95 L48 500 M75 95 L76 500 M96 95 L104 500 M114 95 L130 480 M48 95 L14 500 M124 100 L140 420" stroke="#6a655c" stroke-opacity="0.28" stroke-width="3" fill="none"/>
<g fill="#5e5a52" fill-opacity="0.2"><rect x="46" y="182" width="5" height="10"/><rect x="60" y="180" width="6" height="12"/><rect x="76" y="182" width="5" height="10"/><rect x="88" y="180" width="6" height="12"/><rect x="100" y="186" width="5" height="10"/><rect x="38" y="255" width="5" height="12"/><rect x="54" y="250" width="6" height="12"/><rect x="92" y="250" width="5" height="12"/><rect x="108" y="256" width="5" height="10"/><rect x="30" y="330" width="6" height="12"/><rect x="50" y="325" width="5" height="12"/><rect x="86" y="325" width="6" height="12"/><rect x="16" y="400" width="8" height="10"/><rect x="74" y="395" width="5" height="12"/></g>
<path d="M66 95 L62 500 M86 95 L90 500 M105 95 L118 490" stroke="#c8c0b0" stroke-opacity="0.25" stroke-width="2" fill="none"/>
<polygon points="0,502 89,500 89.6,476 197,480 346,524 346,660 0,660" fill="url(#floor)"/>
<polygon points="0,543.6 36.8,543.6 98.4,660 0,660" fill="#a39b8f"/>
<polygon points="36.8,543.6 89.6,540 89.6,575 155,655 155,660 98.4,660" fill="#60666c"/>
<polygon points="89.6,476 197,479 346,516 346,527 155,527" fill="url(#ctop)"/>
<polygon points="172,253 272,213 272,507 172,454" fill="url(#tv)"/>
<polygon points="266,216 272,213 272,507 266,505" fill="#7a756c"/>
<polygon points="172,444 266,482 266,506 172,456" fill="#777777"/>
<polygon points="172,448 205,462 205,468 172,456" fill="#3a3a3a"/>
<polygon points="205,462 242,477 242,484 205,469" fill="#b8b8b8" fill-opacity="0.8"/>
<polygon points="172,253 272,213 271,224 182,259" fill="#ececee"/><polygon points="182,253 226,243 205,250 180,256" fill="#7a756c" fill-opacity="0.8"/>
<rect x="221" y="487" width="14" height="23" fill="#1c1c1c"/>
<polygon points="222,505 268,507 272,512 226,512" fill="#1e1e1e"/>
<polygon points="155,527 346,527 346,660 155,660" fill="#1f1f1f"/>
<polygon points="89.6,476 155,526.5 155,660 89.6,575" fill="#666666"/>
<polygon points="92.5,486 116,504 116,546 92.5,528" fill="#131313"/>
<polygon points="92.5,534 116,552 116,600 92.5,572" fill="#131313"/>
<polygon points="120,507 152,532 152,590 120,566" fill="#131313"/>
<polygon points="120,572 152,596 152,652 120,620" fill="#131313"/>
</g>
</svg>
<div id="vscroll" class="a"></div>
<div id="vtrack" class="a"></div>
<div id="vthumb" class="a"></div>
<svg class="a" style="left:345px;top:58px" width="16" height="602" viewBox="345 58 16 602">
<polygon points="352.9,60.5 347.7,70.5 358.1,70.5" fill="#fff"/>
<polygon points="347.6,648 358,648 352.8,656.6" fill="#fff"/>
</svg>
<div id="hscroll" class="a"></div>
<div id="hthumb" class="a"></div>
<svg class="a" style="left:330px;top:660px" width="15" height="15" viewBox="330 660 15 15"><polygon points="332.7,662.4 342,667.8 332.7,673.3" fill="#fff"/></svg>
<div id="status" class="a">i.5 meshes, NVIDIA GeForce RTX 2060 SUPER (RT), 1.85/7.14/7.78 GB</div>
<div id="prog" class="a"><div class="a" style="left:0.6px;top:1px;width:21.4px;height:6px;background:#8a8a8a"></div><div class="a" style="left:79.7px;top:0.5px;width:7.7px;height:7px;background:#6a6262"></div></div>
<div id="ldark" class="a"></div>
<div id="lgap" class="a"></div>
<div id="lbar1" class="a"></div>
<div id="lbar2" class="a"></div>
<div id="grid" class="a"></div>
<svg class="a" style="left:0;top:761px" width="361" height="203" viewBox="0 761 361 203">
<defs><linearGradient id="nd" x1="0" y1="0" x2="0" y2="1"><stop offset="0" stop-color="#757575"/><stop offset="1" stop-color="#4e4e4e"/></linearGradient></defs>
<rect x="16.4" y="761" width="1.1" height="203" fill="#262626"/>
<rect x="50.8" y="761" width="1.1" height="203" fill="#262626"/>
<rect x="85.3" y="761" width="1.1" height="203" fill="#262626"/>
<rect x="119.7" y="761" width="1.1" height="203" fill="#262626"/>
<rect x="154.2" y="761" width="1.1" height="203" fill="#262626"/>
<rect x="188.6" y="761" width="1.1" height="203" fill="#262626"/>
<rect x="223.0" y="761" width="1.1" height="203" fill="#262626"/>
<rect x="257.5" y="761" width="1.1" height="203" fill="#262626"/>
<rect x="291.9" y="761" width="1.1" height="203" fill="#262626"/>
<rect x="326.4" y="761" width="1.1" height="203" fill="#262626"/>
<rect x="360.8" y="761" width="1.1" height="203" fill="#262626"/>
<rect x="0" y="785.0" width="361" height="1.1" fill="#262626"/>
<rect x="0" y="819.2" width="361" height="1.1" fill="#262626"/>
<rect x="0" y="853.4" width="361" height="1.1" fill="#262626"/>
<rect x="0" y="887.6" width="361" height="1.1" fill="#262626"/>
<rect x="0" y="921.8" width="361" height="1.1" fill="#262626"/>
<rect x="0" y="956.0" width="361" height="1.1" fill="#262626"/>
<rect x="0" y="761" width="361" height="1" fill="#1a1a1a"/>
<path d="M101.8 847.2 C101.8 871.2 84.4 887.7 84.4 911.7" stroke="#5cc8b8" stroke-width="1.2" fill="none"/>
<path d="M118.9 847.2 C118.9 871.2 101.8 887.7 101.8 911.7" stroke="#7a68d0" stroke-width="1.2" fill="none"/>
<path d="M153.3 847.2 C153.3 871.2 136.2 887.7 136.2 911.7" stroke="#d8a8b8" stroke-width="1.2" fill="none"/>
<path d="M170.7 847.2 C170.7 871.2 153.3 887.7 153.3 911.7" stroke="#dddddd" stroke-width="1.2" fill="none"/>
<path d="M187.8 847.2 C187.8 871.2 256.7 887.7 256.7 911.7" stroke="#5cc860" stroke-width="1.2" fill="none"/>
<rect x="85" y="826" width="120" height="21.2" rx="5" fill="url(#nd)" stroke="#2e2e2e" stroke-width="1"/>
<text x="145" y="840.3" font-family="Liberation Sans, sans-serif" font-size="9.8" fill="#f0f0f0" text-anchor="middle">Scene</text>
<circle cx="101.8" cy="847.2" r="3.3" fill="#454545" stroke="#5cc8b8" stroke-width="1.4"/>
<circle cx="118.9" cy="847.2" r="3.3" fill="#454545" stroke="#7a68d0" stroke-width="1.4"/>
<circle cx="136" cy="847.2" r="3.3" fill="#454545" stroke="#6a5ac8" stroke-width="1.4"/>
<circle cx="153.3" cy="847.2" r="3.3" fill="#454545" stroke="#d8a8b8" stroke-width="1.4"/>
<circle cx="170.7" cy="847.2" r="3.3" fill="#454545" stroke="#dddddd" stroke-width="1.4"/>
<circle cx="187.8" cy="847.2" r="3.3" fill="#454545" stroke="#5cc860" stroke-width="1.4"/>
<rect x="68" y="911.7" width="223" height="21.1" rx="5" fill="url(#nd)" stroke="#2e2e2e" stroke-width="1"/>
<rect x="68.5" y="912.2" width="20" height="20" rx="4" fill="#8a8a8a"/>
<rect x="72.2" y="917" width="12.2" height="11.8" fill="#6fa8d8" stroke="#eee" stroke-width="0.8"/>
<polygon points="72.6,926 76,922 79,925 84,921 84,928.4 72.6,928.4" fill="#222"/>
<text x="190" y="926.8" font-family="Liberation Sans, sans-serif" font-size="10" fill="#f0f0f0" text-anchor="middle">Render target</text>
<circle cx="84.4" cy="911.7" r="3.3" fill="#454545" stroke="#5cc8b8" stroke-width="1.4"/>
<circle cx="101.8" cy="911.7" r="3.3" fill="#454545" stroke="#7a68d0" stroke-width="1.4"/>
<circle cx="118.9" cy="911.7" r="3.3" fill="#454545" stroke="#7a68d0" stroke-width="1.4"/>
<circle cx="136.2" cy="911.7" r="3.3" fill="#454545" stroke="#d8a8b8" stroke-width="1.4"/>
<circle cx="153.3" cy="911.7" r="3.3" fill="#454545" stroke="#dddddd" stroke-width="1.4"/>
<circle cx="170.7" cy="911.7" r="3.3" fill="#454545" stroke="#cccccc" stroke-width="1.4"/>
<circle cx="204.9" cy="911.7" r="3.3" fill="#454545" stroke="#d08020" stroke-width="1.4"/>
<circle cx="222.2" cy="911.7" r="3.3" fill="#454545" stroke="#cccccc" stroke-width="1.4"/>
<circle cx="256.7" cy="911.7" r="3.3" fill="#454545" stroke="#5cc860" stroke-width="1.4"/>
<circle cx="273.8" cy="911.7" r="3.3" fill="#454545" stroke="#d040d0" stroke-width="1.4"/>
<circle cx="239.6" cy="911.7" r="3.8" fill="#dddddd"/>
<rect x="181" y="905" width="13.4" height="13.3" fill="#d8b070" stroke="#f0d8a0" stroke-width="1"/>
<circle cx="187.7" cy="911.7" r="3.8" fill="#c89040" stroke="#a07030" stroke-width="1"/>
<circle cx="179.3" cy="933.4" r="3.3" fill="#454545" stroke="#bbbbbb" stroke-width="1.4"/>
</svg>
<div id="divider" class="a"></div>
<div id="rhead" class="a">RNDR browser - RNDR Network</div>
<div id="rchk" class="a"></div>
<div id="web" class="a"><div id="orange" class="a">
<div id="ham" class="a"></div>
<svg class="a" style="left:243px;top:17px" width="24" height="24" viewBox="0 0 24 24"><circle cx="8.7" cy="8.3" r="5.4" stroke="#fff1dc" stroke-width="2.3" fill="none"/><path d="M12.8 12.6 L18.2 18.2" stroke="#fff1dc" stroke-width="2.4" stroke-linecap="round"/></svg>
<div id="jobs" class="a">Jobs</div>
<div id="scenes" class="a">Scenes</div>
<div id="uline" class="a"></div>
<div id="pill" class="a"></div>
<div id="ptxt" class="a">€ 0.00 | RNDR 0.00</div>
<div id="av" class="a">AL</div>
</div>
<div id="dash" class="a"></div>
<svg class="a" style="left:329.8px;top:103.1px" width="44" height="30" viewBox="0 4 24 16"><path fill="#808080" d="M19.35 10.04C18.67 6.59 15.64 4 12 4 9.11 4 6.6 5.64 5.35 8.04 2.34 8.36 0 10.91 0 14c0 3.310 2.69 6 6 6h13c2.76 0 5-2.24 5-5 0-2.64-2.05-4.78-4.65-4.960zM14 13v4h-4v-4H7l5-5 5 5h-3z"/></svg>
<div id="drag" class="a">Drag and drop or click here to upload your scene files.<br>Up to 10 scenes can be uploaded at the same time.</div>
<div id="h1" class="a">No scenes uploaded yet...</div>
<div id="para" class="a">Let's get started! Check out <span>this tutorial</span> on how to prepare your files, and use<br>the area above to upload your first scene.</div>
<div class="a ft" style="left:132.8px;font-size:12.05px">© OTOY Inc. – 2024 All Rights Reserved.</div><div class="a ft" style="left:362.5px">•</div><div class="a ft" style="left:376.3px">Terms &amp; Conditions</div><div class="a ft" style="left:495.7px">•</div><div class="a ft" style="left:510.6px;font-size:11.95px">Privacy Policy</div>
<div id="help" class="a"></div>
<svg class="a" style="left:610px;top:511px" width="18" height="18" viewBox="0 0 18 18"><circle cx="9" cy="9" r="7.4" stroke="#fff" stroke-width="1.7" fill="none"/><text x="9" y="13" font-family="Liberation Sans, sans-serif" font-size="11" font-weight="bold" fill="#fff" text-anchor="middle">?</text></svg>
<div id="helpt" class="a">Help</div>
</div>
<div id="wscroll" class="a"></div>
<div id="wthumb" class="a"></div>
<div id="ihead" class="a">Node inspector</div>
<div id="ichk" class="a"></div>
<div id="istrip" class="a"></div>
<svg class="a" style="left:365px;top:631px" width="31" height="333" viewBox="365 631 31 333">
<rect x="370" y="636.5" width="9" height="7" fill="#ddd" stroke="#777" stroke-width="0.6"/><rect x="370" y="636.5" width="9" height="1.8" fill="#fff"/>
<rect x="373" y="641" width="10" height="7.5" fill="#eee" stroke="#666" stroke-width="0.6"/><rect x="373" y="641" width="10" height="1.8" fill="#fff"/>
<rect x="370" y="657.6" width="7" height="3" fill="#ddd" stroke="#555" stroke-width="0.5"/><rect x="373" y="661.5" width="9" height="3" fill="#ddd" stroke="#555" stroke-width="0.5"/>
<rect x="368" y="676.5" width="17.7" height="1.2" fill="#3c3c3c"/>
<rect x="370" y="683" width="12.5" height="12.5" fill="#8cc0e8" stroke="#ccc" stroke-width="0.8"/><polygon points="370.5,692 374,689 377,691 382,688 382,695 370.5,695" fill="#2a3a20"/><rect x="370.5" y="693" width="11.5" height="2" fill="#c8d8a0"/>
<rect x="368" y="701.3" width="17.7" height="1.2" fill="#3c3c3c"/>
<rect x="370" y="711.5" width="13" height="8.5" rx="1.2" fill="#333" stroke="#aaa" stroke-width="0.8"/><circle cx="377.5" cy="716" r="3" fill="#a03040" stroke="#ccc" stroke-width="0.8"/><rect x="375" y="709.7" width="4" height="2" fill="#aaa"/>
<path d="M370 733 Q376 730 382 731 V741 Q376 740 370 743 Z" fill="#7aa0b8" stroke="#ddd" stroke-width="0.9"/><rect x="370.5" y="738" width="11" height="2.5" fill="#a8c090"/>
<ellipse cx="376" cy="757" rx="6" ry="3" fill="#ddd" stroke="#888" stroke-width="0.6"/><path d="M370 757 V762 Q376 766 382 762 V757" fill="#7aa0b8" stroke="#ddd" stroke-width="0.8"/><circle cx="374" cy="756.5" r="1.5" fill="#333"/>
<polygon points="374,775 370,785 378,785" fill="#a8c0d8" stroke="#ddd" stroke-width="0.6"/><circle cx="379" cy="783" r="4" fill="#e86020"/><circle cx="378" cy="782" r="1.5" fill="#f8a060"/>
<rect x="368" y="793" width="17.7" height="1.2" fill="#3c3c3c"/>
<rect x="370" y="800" width="12.5" height="12.5" fill="#333" stroke="#ddd" stroke-width="1"/><path d="M372.5 802 V810 H380.5" stroke="#ddd" stroke-width="1.2" fill="none"/>
<circle cx="376.3" cy="828.7" r="6.1" fill="#e8e8e8" stroke="#999" stroke-width="0.8"/><path d="M376.3 824.5 V829 H380" stroke="#333" stroke-width="1" fill="none"/>
<rect x="370" y="845" width="12.5" height="12.5" fill="#222" stroke="#ddd" stroke-width="1"/><path d="M371.5 855 L375 848 L378 853 L381 847 M372 849 L380 856" stroke="#ccc" stroke-width="1.1" fill="none"/>
<polygon points="370,870 374,866.8 383,866.8 383,876 379,880 370,880" fill="#e03030"/><polygon points="374,866.8 383,866.8 379,870 370,870" fill="#f06060"/>
<polygon points="370,892 374,889 383,889 383,898.5 379,902 370,902" fill="#90b8e0"/><polygon points="374,889 383,889 379,892 370,892" fill="#c0d8f0"/><polygon points="379,892 383,889 383,898.5 379,902" fill="#6890b8"/>
<polygon points="370,915 374,912 383,912 383,921.5 379,924.6 370,924.6" fill="#e8b040"/><polygon points="374,912 383,912 379,915 370,915" fill="#f8d080"/><polygon points="372,917 379,917 379,922 372,922" fill="#7aa0c8"/>
<rect x="368" y="930" width="17.7" height="1.2" fill="#3c3c3c"/>
<rect x="370" y="936.8" width="12.5" height="12.5" fill="#f4f4f4" stroke="#888" stroke-width="0.6"/><polygon points="371,947 373.5,943 375,944 376.5,939 378.5,942 381.5,947" fill="#111"/>
<rect x="370.5" y="959" width="11.5" height="8" rx="3" fill="#333" stroke="#ccc" stroke-width="0.9"/><path d="M373 961 L376 963 L379 961" stroke="#e0d040" stroke-width="1" fill="none"/>
</svg>
<div id="ibody" class="a"></div>
<div id="iscroll" class="a"></div>
<div id="ithumb" class="a"></div>
<svg class="a" style="left:1065px;top:631px" width="15" height="15" viewBox="1065 631 15 15"><polygon points="1073,634.7 1067.7,642.9 1078.2,642.9" fill="#fff"/></svg>
<div id="kico" class="a"><svg width="14" height="13" style="position:absolute;left:0;top:0"><path d="M1.5 11 L4.5 3 L7.5 8 L11.5 1.5 M3 3.5 L11 11" stroke="#d8e0e0" stroke-width="1.5" fill="none"/><path d="M2 9 L5 6" stroke="#90c070" stroke-width="1" fill="none"/></svg></div>
<div id="ktxt" class="a">Kernel</div>
<div class="a" style="left:420.2px;top:660px;width:0;height:0;border-top:6.5px solid #e8e8e8;border-left:3px solid transparent;border-right:3px solid transparent"></div><div id="qtxt" class="a">Quality</div>
<div id="dd" class="a">Path tracing<div class="a" style="left:95px;top:8px;width:0;height:0;border-top:4px solid #ccc;border-left:2.8px solid transparent;border-right:2.8px solid transparent"></div></div>
<div id="ddbtn" class="a"><svg width="12" height="12" style="position:absolute;left:0;top:0"><circle cx="5.7" cy="5.7" r="4" stroke="#ddd" stroke-width="1.2" fill="none"/><path d="M5.7 3 V6.5 L7.5 6.5" stroke="#9c6" stroke-width="1" fill="none"/></svg></div>
<div class="a ico" style="top:672.8px;border-color:#a89a58"><div class="icin" style="background:linear-gradient(#2c3242,#5a6272)">
<div style="position:absolute;left:0;right:0;top:5px;height:1.6px;background:#d8d8b0"></div>
</div></div>
<div class="a rowbg" style="top:672.8px"></div>
<div class="a rarr" style="top:678.6px"></div>
<div class="a lbl" style="top:672.8px">Max. samples:</div>
<div class="a sld" style="top:674.8px"><div class="sfill" style="width:241.2px"></div><div class="sl"></div><div class="sr"></div><div class="sval">2000</div></div>
<div class="a ico" style="top:695.2px;border-color:#a89a58"><div class="icin" style="background:linear-gradient(#2c3242,#5a6272)">
<div style="position:absolute;left:0;right:0;top:5px;height:1.6px;background:#d8d8b0"></div>
</div></div>
<div class="a rowbg" style="top:695.2px"></div>
<div class="a rarr" style="top:701.0px"></div>
<div class="a lbl" style="top:695.2px">Diffuse depth:</div>
<div class="a sld" style="top:697.2px"><div class="sfill" style="width:18.6px"></div><div class="sl"></div><div class="sr"></div><div class="sval">4</div></div>
<div class="a ico" style="top:717.7px;border-color:#a89a58"><div class="icin" style="background:linear-gradient(#2c3242,#5a6272)">
<div style="position:absolute;left:0;right:0;top:5px;height:1.6px;background:#d8d8b0"></div>
</div></div>
<div class="a rowbg" style="top:717.7px"></div>
<div class="a rarr" style="top:723.5px"></div>
<div class="a lbl" style="top:717.7px">Specular depth:</div>
<div class="a sld" style="top:719.7px"><div class="sfill" style="width:45.3px"></div><div class="sl"></div><div class="sr"></div><div class="sval">9</div></div>
<div class="a ico" style="top:740.1px;border-color:#a89a58"><div class="icin" style="background:linear-gradient(#2c3242,#5a6272)">
<div style="position:absolute;left:0;right:0;top:5px;height:1.6px;background:#d8d8b0"></div>
</div></div>
<div class="a rowbg" style="top:740.1px"></div>
<div class="a rarr" style="top:745.9px"></div>
<div class="a lbl" style="top:740.1px">Scatter depth:</div>
<div class="a sld" style="top:742.1px"><div class="sfill" style="width:418.6px"></div><div class="sl"></div><div class="sr"></div><div class="sval">256</div></div>
<div class="a ico" style="top:762.5px;border-color:#a89a58"><div class="icin" style="background:linear-gradient(#2c3242,#5a6272)">
<div style="position:absolute;left:0;right:0;top:5px;height:1.6px;background:#d8d8b0"></div>
</div></div>
<div class="a rowbg" style="top:762.5px"></div>
<div class="a rarr" style="top:768.3px"></div>
<div class="a lbl" style="top:762.5px">Maximal overlapping volumes:</div>
<div class="a sld" style="top:764.5px"><div class="sfill" style="width:418.6px"></div><div class="sl"></div><div class="sr"></div><div class="sval">4</div></div>
<div class="a ico" style="top:784.9px;border-color:#7d8ba2"><div class="icin" style="background:linear-gradient(#323c4c,#6a7686)">
<svg width="11" height="10" style="position:absolute;left:0;top:0"><path d="M1 8 H4 L7 3 H10" stroke="#c8d0e0" stroke-width="1.4" fill="none"/></svg>
</div></div>
<div class="a rowbg" style="top:784.9px"></div>
<div class="a rarr" style="top:790.7px"></div>
<div class="a lbl" style="top:784.9px">Ray epsilon:</div>
<div class="a sld" style="top:786.9px"><div class="sfill" style="width:108.1px"></div><div class="sl"></div><div class="sr"></div><div class="sval">0.000100</div></div>
<div class="a ico" style="top:807.4px;border-color:#7d8ba2"><div class="icin" style="background:linear-gradient(#323c4c,#6a7686)">
<svg width="11" height="10" style="position:absolute;left:0;top:0"><path d="M1 8 H4 L7 3 H10" stroke="#c8d0e0" stroke-width="1.4" fill="none"/></svg>
</div></div>
<div class="a rowbg" style="top:807.4px"></div>
<div class="a rarr" style="top:813.2px"></div>
<div class="a lbl" style="top:807.4px">Filter size:</div>
<div class="a sld" style="top:809.4px"><div class="sfill" style="width:418.6px"></div><div class="sl"></div><div class="sr"></div><div class="sval">1.200</div></div>
<div class="a ico" style="top:829.8px;border-color:#a08c96"><div class="icin" style="background:linear-gradient(#2c3634,#505656)">
<svg width="11" height="10" style="position:absolute;left:0;top:0"><path d="M4.5 2V8M6.5 2V8M0.5 5H3.5M7.5 5H10.5" stroke="#e098c0" stroke-width="1.1" fill="none"/><path d="M2.2 3.6 L3.8 5 L2.2 6.4M8.8 3.6 L7.2 5 L8.8 6.4" stroke="#e098c0" stroke-width="0.9" fill="none"/></svg>
</div></div>
<div class="a rowbg" style="top:829.8px"></div>
<div class="a rarr" style="top:835.6px"></div>
<div class="a lbl" style="top:829.8px">Alpha shadows:</div>

<div class="a chk" style="top:831.6px"><svg width="14" height="14" style="position:absolute;left:0;top:0"><path d="M2.2 7.6 L5.6 11.6 L12.6 1.8" stroke="#fff" stroke-width="2.1" fill="none" stroke-linecap="round" stroke-linejoin="round"/></svg></div>
<div class="a ico" style="top:852.2px;border-color:#7d8ba2"><div class="icin" style="background:linear-gradient(#323c4c,#6a7686)">
<svg width="11" height="10" style="position:absolute;left:0;top:0"><path d="M1 8 H4 L7 3 H10" stroke="#c8d0e0" stroke-width="1.4" fill="none"/></svg>
</div></div>
<div class="a rowbg" style="top:852.2px"></div>
<div class="a rarr" style="top:858.0px"></div>
<div class="a lbl" style="top:852.2px">Caustic blur:</div>
<div class="a sld" style="top:854.2px"><div class="sfill" style="width:418.6px"></div><div class="sl"></div><div class="sr"></div><div class="sval">1.000</div></div>
<div class="a ico" style="top:874.7px;border-color:#7d8ba2"><div class="icin" style="background:linear-gradient(#323c4c,#6a7686)">
<svg width="11" height="10" style="position:absolute;left:0;top:0"><path d="M1 8 H4 L7 3 H10" stroke="#c8d0e0" stroke-width="1.4" fill="none"/></svg>
</div></div>
<div class="a rowbg" style="top:874.7px"></div>
<div class="a rarr" style="top:880.5px"></div>
<div class="a lbl" style="top:874.7px">GI clamp:</div>
<div class="a sld" style="top:876.7px"><div class="sfill" style="width:120.4px"></div><div class="sl"></div><div class="sr"></div><div class="sval">2.000</div></div>
<div class="a ico" style="top:897.1px;border-color:#a08c96"><div class="icin" style="background:linear-gradient(#2c3634,#505656)">
<svg width="11" height="10" style="position:absolute;left:0;top:0"><path d="M4.5 2V8M6.5 2V8M0.5 5H3.5M7.5 5H10.5" stroke="#e098c0" stroke-width="1.1" fill="none"/><path d="M2.2 3.6 L3.8 5 L2.2 6.4M8.8 3.6 L7.2 5 L8.8 6.4" stroke="#e098c0" stroke-width="0.9" fill="none"/></svg>
</div></div>
<div class="a rowbg" style="top:897.1px"></div>
<div class="a rarr" style="top:902.9px"></div>
<div class="a lbl" style="top:897.1px">Nested dielectrics:</div>

<div class="a chk" style="top:898.9px"><svg width="14" height="14" style="position:absolute;left:0;top:0"><path d="M2.2 7.6 L5.6 11.6 L12.6 1.8" stroke="#fff" stroke-width="2.1" fill="none" stroke-linecap="round" stroke-linejoin="round"/></svg></div>
<div class="a ico" style="top:919.5px;border-color:#a08c96"><div class="icin" style="background:linear-gradient(#2c3634,#505656)">
<svg width="11" height="10" style="position:absolute;left:0;top:0"><path d="M4.5 2V8M6.5 2V8M0.5 5H3.5M7.5 5H10.5" stroke="#e098c0" stroke-width="1.1" fill="none"/><path d="M2.2 3.6 L3.8 5 L2.2 6.4M8.8 3.6 L7.2 5 L8.8 6.4" stroke="#e098c0" stroke-width="0.9" fill="none"/></svg>
</div></div>
<div class="a rowbg" style="top:919.5px"></div>
<div class="a rarr" style="top:925.3px"></div>
<div class="a lbl" style="top:919.5px">Irradiance mode:</div>

<div class="a chk" style="top:921.3px"></div>
<div class="a ico" style="top:942.0px;border-color:#a89a58"><div class="icin" style="background:linear-gradient(#2c3242,#5a6272)">
<div style="position:absolute;left:0;right:0;top:5px;height:1.6px;background:#d8d8b0"></div>
</div></div>
<div class="a rowbg" style="top:942.0px"></div>
<div class="a rarr" style="top:947.8px"></div>
<div class="a lbl" style="top:942.0px">Max subdivision level:</div>
<div class="a sld" style="top:944.0px"><div class="sfill" style="width:418.6px"></div><div class="sl"></div><div class="sr"></div><div class="sval">10</div></div>
</body></html>
